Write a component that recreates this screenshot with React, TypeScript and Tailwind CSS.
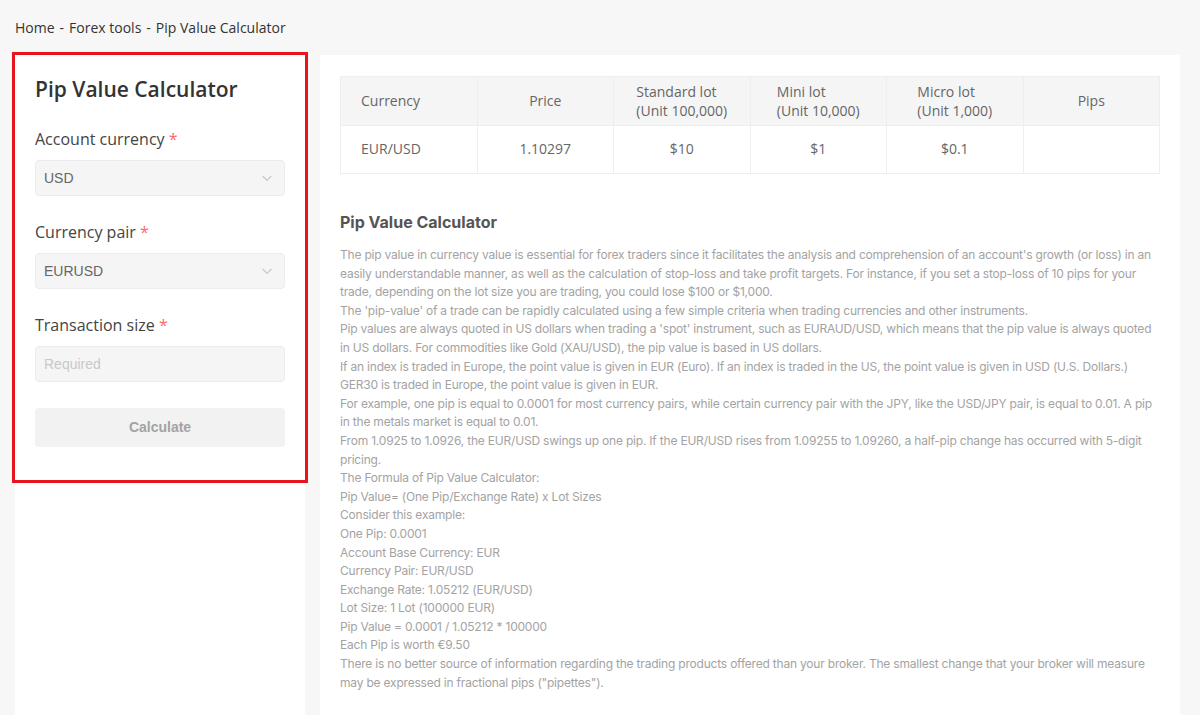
import React from 'react';

const ChevronDown = () => (
  <svg width="14" height="14" viewBox="0 0 24 24" fill="none" stroke="#c8c8c8" strokeWidth="2" strokeLinecap="round" strokeLinejoin="round">
    <path d="M5 9l7 7 7-7" />
  </svg>
);

const paragraphs = [
  "The pip value in currency value is essential for forex traders since it facilitates the analysis and comprehension of an account's growth (or loss) in an easily understandable manner, as well as the calculation of stop-loss and take profit targets. For instance, if you set a stop-loss of 10 pips for your trade, depending on the lot size you are trading, you could lose $100 or $1,000.",
  "The 'pip-value' of a trade can be rapidly calculated using a few simple criteria when trading currencies and other instruments.",
  "Pip values are always quoted in US dollars when trading a 'spot' instrument, such as EURAUD/USD, which means that the pip value is always quoted in US dollars. For commodities like Gold (XAU/USD), the pip value is based in US dollars.",
  "If an index is traded in Europe, the point value is given in EUR (Euro). If an index is traded in the US, the point value is given in USD (U.S. Dollars.) GER30 is traded in Europe, the point value is given in EUR.",
  "For example, one pip is equal to 0.0001 for most currency pairs, while certain currency pair with the JPY, like the USD/JPY pair, is equal to 0.01. A pip in the metals market is equal to 0.01.",
  "From 1.0925 to 1.0926, the EUR/USD swings up one pip. If the EUR/USD rises from 1.09255 to 1.09260, a half-pip change has occurred with 5-digit pricing.",
  "The Formula of Pip Value Calculator:",
  "Pip Value= (One Pip/Exchange Rate) x Lot Sizes",
  "Consider this example:",
  "One Pip: 0.0001",
  "Account Base Currency: EUR",
  "Currency Pair: EUR/USD",
  "Exchange Rate: 1.05212 (EUR/USD)",
  "Lot Size: 1 Lot (100000 EUR)",
  "Pip Value = 0.0001 / 1.05212 * 100000",
  "Each Pip is worth €9.50",
  "There is no better source of information regarding the trading products offered than your broker. The smallest change that your broker will measure may be expressed in fractional pips (\"pipettes\").",
];

const Field: React.FC<{ label: string; children: React.ReactNode }> = ({ label, children }) => (
  <div className="mb-[25px]">
    <div className="text-[16px] leading-[22px] text-[#444] mb-[10px]">
      {label} <span className="text-[#f56c6c]">*</span>
    </div>
    {children}
  </div>
);

const App: React.FC = () => {
  return (
    <div className="min-h-screen bg-[#f7f7f7] font-['Open_Sans',sans-serif]">
      <div className="h-[55px] pl-[15px] pt-[18px] text-[14px] leading-[20px] text-[#333]">
        Home<span className="mx-[5px]">-</span>Forex tools<span className="mx-[5px]">-</span>Pip Value Calculator
      </div>

      <div className="flex pl-[15px] gap-[15px] items-stretch">
        {/* left column */}
        <div className="w-[290px] h-[660px] bg-white">
          <div className="outline-[3px] outline-solid outline-[#e8141c] h-[425px] px-5 pt-[17px]">
            <h1 className="text-[21px] leading-[34px] font-semibold text-[#333] mb-[22px]">Pip Value Calculator</h1>

            <Field label="Account currency">
              <div className="h-[36px] rounded-[4px] border border-[#ececec] bg-[#f5f5f5] flex items-center justify-between pl-[8px] pr-[10px] font-['Liberation_Sans',sans-serif] text-[14px] text-[#666]">
                <span>USD</span>
                <ChevronDown />
              </div>
            </Field>

            <Field label="Currency pair">
              <div className="h-[36px] rounded-[4px] border border-[#ececec] bg-[#f5f5f5] flex items-center justify-between pl-[8px] pr-[10px] font-['Liberation_Sans',sans-serif] text-[14px] text-[#666]">
                <span>EURUSD</span>
                <ChevronDown />
              </div>
            </Field>

            <Field label="Transaction size">
              <div className="h-[36px] rounded-[4px] border border-[#ececec] bg-[#f5f5f5] flex items-center pl-[8px] font-['Liberation_Sans',sans-serif] text-[14px] text-[#c8c8c8]">
                Required
              </div>
            </Field>

            <button className="mt-[1px] w-full h-[39px] rounded-[4px] bg-[#f2f2f2] font-['Liberation_Sans',sans-serif] text-[14px] font-bold text-[#a3a3a3]">
              Calculate
            </button>
          </div>
        </div>

        {/* right column */}
        <div className="w-[860px] h-[660px] bg-white px-5 pt-[21px]">
          <table className="w-full table-fixed border-collapse text-[14px] text-[#666] font-['Open_Sans',sans-serif]">
            <thead>
              <tr className="bg-[#f5f5f5] h-[49px]">
                <th className="font-normal text-left pl-5 border border-[#eee] pb-[2px]">Currency</th>
                <th className="font-normal text-center border border-[#eee] pb-[2px]">Price</th>
                <th className="font-normal text-center border border-[#eee] leading-[19px]">
                  <span className="inline-block text-left">Standard lot<br />(Unit 100,000)</span>
                </th>
                <th className="font-normal text-center border border-[#eee] leading-[19px]">
                  <span className="inline-block text-left">Mini lot<br />(Unit 10,000)</span>
                </th>
                <th className="font-normal text-center border border-[#eee] leading-[19px]">
                  <span className="inline-block text-left">Micro lot<br />(Unit 1,000)</span>
                </th>
                <th className="font-normal text-center border border-[#eee] pb-[2px]">Pips</th>
              </tr>
            </thead>
            <tbody>
              <tr className="h-[48px]">
                <td className="text-left pl-5 border border-[#eee] pb-[2px]">EUR/USD</td>
                <td className="text-center border border-[#eee] pb-[2px]">1.10297</td>
                <td className="text-center border border-[#eee] pb-[2px]">$10</td>
                <td className="text-center border border-[#eee] pb-[2px]">$1</td>
                <td className="text-center border border-[#eee] pb-[2px]">$0.1</td>
                <td className="text-center border border-[#eee]"></td>
              </tr>
            </tbody>
          </table>

          <div className="mt-[36px] font-['Inter',sans-serif]">
            <h2 className="text-[16px] leading-[24px] font-bold text-[#555] mb-[12px]">Pip Value Calculator</h2>
            <div className="text-[12px] tracking-[-0.2px] leading-[18.6px] text-[#a3a3a3]">
              {paragraphs.map((p, i) => (
                <p key={i}>{p}</p>
              ))}
            </div>
          </div>
        </div>
      </div>
    </div>
  );
};

export default App;
